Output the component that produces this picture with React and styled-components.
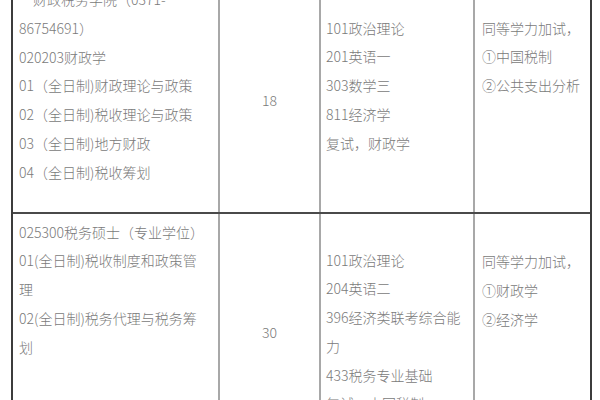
import React from "react";
import styled, { createGlobalStyle } from "styled-components";

const Global = createGlobalStyle`
  html, body { margin: 0; padding: 0; background: #fff; }
  body { width: 600px; height: 400px; overflow: hidden; }
`;

const Page = styled.div`
  width: 600px;
  height: 400px;
  overflow: hidden;
  background: #fff;
`;

const Table = styled.div`
  margin-left: 11px;
  margin-top: -20px;
  width: 577px;
  border-left: 2px solid #3c3c3c;
  border-right: 2px solid #3c3c3c;
  font-family: "Noto Sans CJK SC", "Noto Sans", sans-serif;
  font-size: 14px;
  font-weight: 300;
  color: #7a7a7a;
`;

const Row = styled.div`
  display: grid;
  grid-template-columns: 207px 101px 154px 111px;
  height: ${(p) => p.$h}px;
  border-bottom: ${(p) => (p.$last ? "none" : "2px solid #4a4a4a")};
`;

const Cell = styled.div`
  box-sizing: border-box;
  padding-top: ${(p) => p.$pt}px;
  padding-left: ${(p) => p.$pl}px;
  border-right: ${(p) => (p.$end ? "none" : "2px solid #a8a8a8")};
  text-align: ${(p) => (p.$center ? "center" : "left")};
  overflow: hidden;
`;

const Line = styled.div`
  height: 28.75px;
  line-height: 28.75px;
  white-space: nowrap;
  padding-left: ${(p) => (p.$indent ? 14 : 0)}px;
`;

const rows = [
  {
    h: 232,
    cells: [
      { pt: 5, pl: 6, lines: ["财政税务学院（0371-", "86754691）", "020203财政学", "01（全日制)财政理论与政策", "02（全日制)税收理论与政策", "03（全日制)地方财政", "04（全日制)税收筹划"], indentFirst: true },
      { pt: 105.5, pl: 0, center: true, lines: ["18"] },
      { pt: 33.6, pl: 5, lines: ["101政治理论", "201英语一", "303数学三", "811经济学", "复试，财政学"] },
      { pt: 33.6, pl: 7, end: true, lines: ["同等学力加试，", "①中国税制", "②公共支出分析"] },
    ],
  },
  {
    h: 220,
    last: true,
    cells: [
      { pt: 3.6, pl: 6, lines: ["025300税务硕士（专业学位）", "01(全日制)税收制度和政策管", "理", "02(全日制)税务代理与税务筹", "划"] },
      { pt: 103.6, pl: 0, center: true, lines: ["30"] },
      { pt: 31.6, pl: 5, lines: ["101政治理论", "204英语二", "396经济类联考综合能", "力", "433税务专业基础", "复试，中国税制"] },
      { pt: 33.2, pl: 7, end: true, lines: ["同等学力加试，", "①财政学", "②经济学"] },
    ],
  },
];

export default function App() {
  return (
    <Page>
      <Global />
      <Table>
        {rows.map((r, ri) => (
          <Row key={ri} $h={r.h} $last={r.last}>
            {r.cells.map((c, ci) => (
              <Cell key={ci} $pt={c.pt} $pl={c.pl} $end={c.end} $center={c.center}>
                {c.lines.map((l, li) => (
                  <Line key={li} $indent={c.indentFirst && li === 0}>
                    {l}
                  </Line>
                ))}
              </Cell>
            ))}
          </Row>
        ))}
      </Table>
    </Page>
  );
}
